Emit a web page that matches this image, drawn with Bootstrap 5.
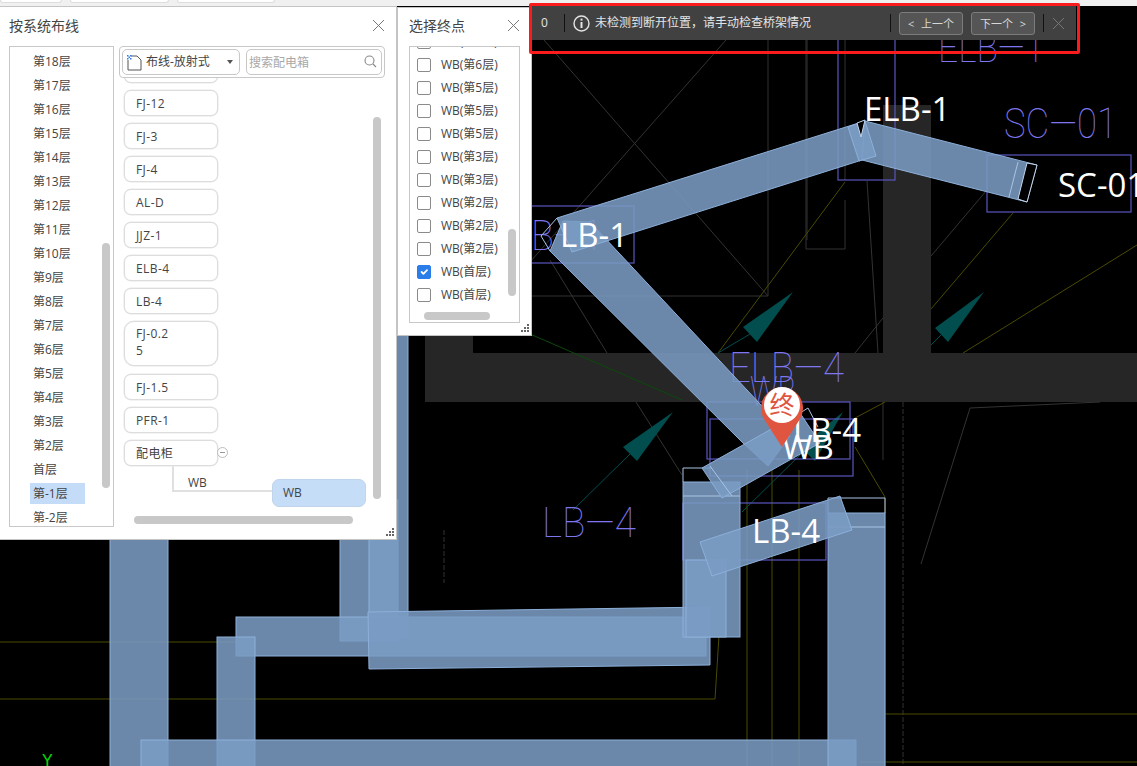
<!DOCTYPE html>
<html lang="en">
<head>
    <meta charset="UTF-8">
    <meta name="viewport" content="width=device-width, initial-scale=1.0">
    <title>按系统布线</title>
    <link rel="stylesheet" href="https://cdn.jsdelivr.net/npm/bootstrap@5.3.0/dist/css/bootstrap.min.css">
    <style>
        html, body { margin: 0; background: #000; overflow: hidden; }
        body { font-family: "Open Sans", "Noto Sans CJK SC", sans-serif; font-size: 12px; color: #444; }
        .stage { position: relative; width: 1137px; height: 766px; overflow: hidden; background: #000; }
        .cad { position: absolute; left: 0; top: 0; }

        .top-strip { position: absolute; left: 0; top: 0; width: 100%; height: 6px; background: #f0f0f0; }
        .top-tab { height: 3px; background: #fff; border: 1px solid #ddd; border-top: 0; border-radius: 0 0 4px 4px; }

        .wall { fill: #262626; }
        .thin { stroke: #333; stroke-width: 1; fill: none; }
        .dash { stroke: #333; stroke-width: 1; fill: none; stroke-dasharray: 5 2; }
        .olive { stroke: #4a4a00; stroke-width: 1; fill: none; }
        .green { stroke: #0a4a0a; stroke-width: 1; fill: none; }
        .teal { fill: #024d4d; }
        .teal-line { stroke: #024d4d; stroke-width: 1; fill: none; }
        .box { stroke: #5a55c0; stroke-width: 1.2; fill: none; }
        .tray { fill: rgb(122,155,195); fill-opacity: .88; stroke: #8db0da; stroke-width: 1; }
        .tray-edge { fill: none; stroke: #a9c4e4; stroke-width: 1; }
        .tray-end { fill: #000; stroke: #c4d6ec; stroke-width: 1; }
        .cad-blue { font-family: Roboto, "Liberation Sans", sans-serif; font-weight: 100; font-size: 43px; fill: #7d76ee; }
        .cad-white { font-family: "Open Sans", sans-serif; font-size: 33px; fill: #fff; }
        .cad-axis { font-family: "Liberation Sans", sans-serif; font-size: 16px; fill: #00e000; }
        .pin-body { fill: #e05540; }
        .pin-text { font-family: "Noto Sans CJK SC", sans-serif; font-size: 25px; fill: #e05540; }

        .float-win { position: absolute; background: #fff; border: 1px solid #c4c4c4; }
        .win-route { left: -2px; top: 6px; width: 399px; height: 534px; padding: 0 10px 0 10px; }
        .win-end { left: 397px; top: 7px; width: 135px; height: 329px; padding: 0 11px; }
        .win-head { height: 39px; font-size: 14px; color: #444; padding-bottom: 3px; }
        .win-end .win-head { height: 38px; }
        .x-mark { width: 13px; height: 13px; stroke: #777; stroke-width: 1; fill: none; flex: none; }
        .route-x { margin-right: 1px; }
        .win-grip { position: absolute; right: 1px; bottom: 2px; width: 10px; height: 10px; fill: #666; }

        .floor-box { position: relative; width: 105px; height: 481px; border: 1px solid #c8c8c8; overflow: hidden; padding-top: 3px; flex: none; }
        .floor-row { height: 24px; line-height: 24px; font-size: 12px; padding-left: 20px; }
        .floor-row span { display: inline-block; height: 21px; line-height: 21px; padding: 0 14px 0 3px; width: 55px; }
        .floor-on span { background: #c5dcf8; }
        .thumb { position: absolute; background: #c8c8c8; border-radius: 4px; }
        .floor-thumb { left: 92px; top: 196px; width: 8px; height: 245px; }

        .tree-side { position: relative; width: 266px; height: 491px; margin-left: 5px; flex: none; }
        .tool-row { position: relative; z-index: 1; height: 32px; padding: 0 2px; border: 1px solid #c8c8c8; border-radius: 4px; background: #fff; gap: 6px; }
        .kind-pick { width: 118px; height: 26px; border: 1px solid #c8c8c8; border-radius: 5px; padding: 0 6px 0 3px; }
        .kind-caret { width: 0; height: 0; border: 3px solid transparent; border-top: 4px solid #555; border-bottom: 0; margin-left: auto; }
        .doc-mark { width: 16px; height: 17px; margin-right: 4px; flex: none; }
        .find-wrap { position: relative; width: 136px; height: 26px; }
        .find-input.form-control { height: 26px; min-height: 0; font-size: 12px; padding: 0 20px 0 2px; border: 1px solid #c8c8c8; border-radius: 5px; color: #444; box-shadow: none; }
        .find-input::placeholder { color: #a8a8a8; }
        .find-mark { position: absolute; right: 5px; top: 6px; width: 13px; height: 13px; stroke: #888; fill: none; stroke-width: 1.1; }

        .tree-clip { height: 459px; overflow: hidden; padding-left: 5px; }
        .tree-list { margin-top: -21px; gap: 7px; }
        .tree-node { width: 94px; height: 26px; line-height: 26px; border: 1px solid #ddd; border-radius: 7px; padding-left: 11px; box-shadow: 0 0 0 .5px #e8e8e8; background: #fff; flex: none; letter-spacing: .4px; }
        .tree-tall { height: 45px; line-height: 17px; padding-top: 3px; border-radius: 10px; margin-bottom: 1px; }
        .tree-fold { position: absolute; left: 92px; top: 6px; width: 11px; height: 11px; }
        .tree-kids { margin-top: -7px; margin-left: 48px; }
        .kid-link { width: 100px; height: 26px; border-left: 2px solid #e0e0e0; border-bottom: 2px solid #e0e0e0; padding: 8px 0 0 14px; line-height: 17px; }
        .kid-node { width: 94px; height: 28px; line-height: 26px; margin-top: 13px; background: #c6ddf8; border: 1px solid #c0d4ec; border-radius: 7px; padding-left: 10px; }
        .tree-v { left: 254px; top: 71px; width: 8px; height: 382px; }
        .tree-h { left: 15px; top: 470px; width: 219px; height: 8px; }

        .end-box { position: relative; height: 277px; border: 1px solid #c8c8c8; overflow: hidden; padding-left: 7px; }
        .end-list { margin-top: -17px; }
        .end-row { height: 23px; gap: 10px; font-size: 12px; flex: none; }
        .end-row .form-check-input { width: 14px; height: 14px; margin: 0; border: 1px solid #8a8a8a; border-radius: 2px; flex: none; }
        .end-row .form-check-input:checked { background-color: #2b7de9; border-color: #2b7de9; }
        .end-v { left: 98px; top: 182px; width: 8px; height: 67px; }
        .end-h { left: 14px; top: 265px; width: 66px; height: 8px; }

        .msg-bar { position: absolute; left: 530px; top: 6px; width: 546px; height: 34px; background: #414141; color: #e4e4e4; padding-left: 11px; }
        .msg-count { width: 23px; }
        .msg-sep { width: 1px; height: 18px; background: #111; flex: none; }
        .msg-info { width: 17px; height: 17px; margin: 0 5px 0 8px; flex: none; fill: none; stroke: #e4e4e4; }
        .msg-text { width: 295px; white-space: nowrap; }
        .btn.msg-btn { width: 64px; height: 23px; padding: 0 8px; font-size: 11px; line-height: 1; color: #d8d8d8; background: #555; border: 1px solid #7c7c7c; border-radius: 3px; }
        .msg-x { stroke: #777; }
        .red-note { position: absolute; left: 529px; top: 3px; width: 551px; height: 51px; border: 3px solid #fa1c1c; border-radius: 2px; pointer-events: none; }
    </style>
</head>
<body>
<div class="stage">

    <svg class="cad" width="1137" height="766" viewBox="0 0 1137 766">
        <!-- walls -->
        <rect class="wall" x="425" y="353" width="712" height="49"/>
        <rect class="wall" x="883" y="105" width="48" height="250"/>
        <rect class="wall" x="425" y="330" width="48" height="25"/>

        <!-- thin cad lines -->
        <path class="thin" d="M544 40 768 296H530M726 40 530 262M550 260 607 353M636 402 682 475"/>
        <path class="thin" d="M768 40V296M807 40V240M845 40V180M867 181 878 353M883 318 855 353M987 190 931 256"/>
        <path class="thin" d="M1100 402 970 408 921 564M883 402V460"/>
        <path class="thin" d="M806 40V249H845V200"/>
        <path class="dash" d="M903 402V766M444 530V583"/>
        <path class="olive" d="M845 182 718 353M1013 213 931 309M1137 245 963 353M855 418 885 402M855 447 885 497V766"/>
        <path class="olive" d="M747 470V766M772 470V766M799 470V766M0 642H236M0 699H715L725 540M885 714H1137M860 762H1137"/>
        <path class="green" d="M530 334 682 400"/>

        <!-- teal arrows -->
        <path class="teal-line" d="M750 334 718 353"/>
        <polygon class="teal" points="793,292 743,327 757,342"/>
        <path class="teal-line" d="M630 454 573 510"/>
        <polygon class="teal" points="673,412 623,447 637,461"/>
        <path class="teal-line" d="M941 335 931 345"/>
        <polygon class="teal" points="984,292 935,328 948,342"/>
        <path class="teal-line" d="M800 455 742 512"/>
        <polygon class="teal" points="843,412 800,447 815,461"/>

        <!-- blue cad text and frames -->
        <text class="cad-blue" x="938" y="62" textLength="106" lengthAdjust="spacingAndGlyphs">ELB—1</text>
        <text class="cad-blue" x="1004" y="138" textLength="113" lengthAdjust="spacingAndGlyphs">SC—01</text>
        <text class="cad-blue" x="490" y="250" textLength="113" lengthAdjust="spacingAndGlyphs">ELB—1</text>
        <text class="cad-blue" x="729" y="382" textLength="115" lengthAdjust="spacingAndGlyphs">ELB—4</text>
        <text class="cad-blue" x="750" y="406" textLength="46" lengthAdjust="spacingAndGlyphs">WB</text>
        <text class="cad-blue" x="542" y="537" textLength="94" lengthAdjust="spacingAndGlyphs">LB—4</text>
        <rect class="box" x="838" y="30" width="57" height="150"/>
        <rect class="box" x="987" y="155" width="144" height="57"/>
        <rect class="box" x="490" y="206" width="144" height="57"/>
        <rect class="box" x="707" y="402" width="143" height="57"/>
        <rect class="box" x="710" y="419" width="143" height="57"/>
        <rect class="box" x="683" y="503" width="143" height="57"/>

        <!-- trays -->
        <rect class="tray" x="110" y="520" width="58" height="250"/>
        <rect class="tray" x="340" y="500" width="58" height="141"/>
        <rect class="tray" x="369" y="300" width="39" height="338"/>
        <rect class="tray" x="236" y="617" width="470" height="39"/>
        <rect class="tray" x="217" y="637" width="38" height="135"/>
        <polygon class="tray" points="368,612 710,607 710,665 369,669"/>
        <rect class="tray" x="141" y="740" width="715" height="30"/>
        <rect class="tray" x="828" y="513" width="57" height="257"/>
        <path class="tray-edge" d="M828 513V498H885V513M828 527H885"/>
        <rect class="tray" x="683" y="482" width="57" height="155"/>
        <rect class="tray" x="686" y="560" width="40" height="77"/>
        <path class="tray-edge" d="M683 482V468H712M683 496H740"/>
        <polygon class="tray" points="700,542 840,496 852,530 712,576"/>

        <polygon class="tray" points="550,251 563,221 590,222 790,436 768,466 742,442"/>
        <polygon class="tray" points="702,468 800,413 820,443 722,498"/>
        <path class="tray-edge" d="M710 466 732 496M800 413 808 408 818 427"/>

        <polygon class="tray" points="557,218 865,121 862,160 572,252"/>
        <polygon class="tray" points="865,121 1037,165 1027,202 862,160"/>
        <polygon class="tray" points="848,127 865,121 876,156 859,161"/>
        <polygon class="tray-end" points="857,123 865,120 861,137"/>
        <path class="tray-edge" d="M541 236 557 218M541 236 550 251"/>
        <polygon class="tray-end" points="1027,163 1037,165 1027,202 1018,199"/>
        <path class="tray-edge" d="M1018 162 1009 197"/>

        <!-- white labels -->
        <text class="cad-white" x="864" y="121">ELB-1</text>
        <text class="cad-white" x="1058" y="197">SC-01</text>
        <text class="cad-white" x="560" y="247">LB-1</text>
        <text class="cad-white" x="793" y="442">LB-4</text>
        <text class="cad-white" x="782" y="459">WB</text>
        <text class="cad-white" x="752" y="543">LB-4</text>
        <text class="cad-axis" x="42" y="766">Y</text>

        <!-- end point pin -->
        <path class="pin-body" d="M782 447 764 419A21 21 0 1 1 800 419Z"/>
        <circle cx="782" cy="405" r="18" fill="#fff"/>
        <text class="pin-text" x="782" y="414" text-anchor="middle">终</text>
    </svg>

    <div class="top-strip d-flex gap-2">
        <div class="top-tab" style="width: 62px"></div>
        <div class="top-tab" style="width: 99px"></div>
        <div class="top-tab" style="width: 98px"></div>
    </div>

    <!-- route window -->
    <div class="float-win win-route">
        <div class="win-head d-flex align-items-center justify-content-between">
            <span>按系统布线</span>
            <svg class="x-mark route-x" viewBox="0 0 13 13"><path d="M1 1 12 12M12 1 1 12"/></svg>
        </div>
        <div class="d-flex">
            <div class="floor-box">
                <div id="floorList"></div>
                <div class="thumb floor-thumb"></div>
            </div>
            <div class="tree-side">
                <div class="tool-row d-flex align-items-center">
                    <div class="kind-pick d-flex align-items-center">
                        <svg class="doc-mark" viewBox="0 0 16 17">
                            <path d="M5 2H11L15 6V16H2V6" fill="none" stroke="#555"/>
                            <path d="M1 1h1.5v1.5H1zM2.5 2.5H4V4H2.5zM4 1h1.5v1.5H4zM1 4h1.5v1.5H1zM4 4h1.5v1.5H4z" fill="#2f7fe6"/>
                        </svg>
                        <span>布线-放射式</span>
                        <span class="kind-caret"></span>
                    </div>
                    <div class="find-wrap">
                        <input class="find-input form-control" type="text" placeholder="搜索配电箱">
                        <svg class="find-mark" viewBox="0 0 13 13"><circle cx="5.5" cy="5.5" r="4.5"/><path d="M9 9 12 12"/></svg>
                    </div>
                </div>
                <div class="tree-clip">
                    <div class="tree-list d-flex flex-column">
                        <div class="tree-node">FJ-11</div>
                        <div class="tree-node">FJ-12</div>
                        <div class="tree-node">FJ-3</div>
                        <div class="tree-node">FJ-4</div>
                        <div class="tree-node">AL-D</div>
                        <div class="tree-node">JJZ-1</div>
                        <div class="tree-node">ELB-4</div>
                        <div class="tree-node">LB-4</div>
                        <div class="tree-node tree-tall">FJ-0.2<br>5</div>
                        <div class="tree-node">FJ-1.5</div>
                        <div class="tree-node">PFR-1</div>
                        <div class="tree-node position-relative">配电柜
                            <svg class="tree-fold" viewBox="0 0 11 11"><circle cx="5.5" cy="5.5" r="5" fill="#fff" stroke="#bbb"/><path d="M3 5.5H8" stroke="#999"/></svg>
                        </div>
                        <div class="tree-kids d-flex align-items-start">
                            <div class="kid-link">WB</div>
                            <div class="kid-node">WB</div>
                        </div>
                    </div>
                </div>
                <div class="thumb tree-v"></div>
                <div class="thumb tree-h"></div>
            </div>
        </div>
        <svg class="win-grip" viewBox="0 0 10 10"><path d="M7 1h2v2H7zM4 4h2v2H4zM7 4h2v2H7zM1 7h2v2H1zM4 7h2v2H4zM7 7h2v2H7z"/></svg>
    </div>

    <!-- end point window -->
    <div class="float-win win-end">
        <div class="win-head d-flex align-items-center justify-content-between">
            <span class="ms-0">选择终点</span>
            <svg class="x-mark" viewBox="0 0 13 13"><path d="M1 1 12 12M12 1 1 12"/></svg>
        </div>
        <div class="end-box">
            <div class="end-list d-flex flex-column" id="endList"></div>
            <div class="thumb end-v"></div>
            <div class="thumb end-h"></div>
        </div>
        <svg class="win-grip" viewBox="0 0 10 10"><path d="M7 1h2v2H7zM4 4h2v2H4zM7 4h2v2H7zM1 7h2v2H1zM4 7h2v2H4zM7 7h2v2H7z"/></svg>
    </div>

    <!-- message bar -->
    <div class="msg-bar d-flex align-items-center">
        <span class="msg-count">0</span>
        <span class="msg-sep"></span>
        <svg class="msg-info" viewBox="0 0 17 17"><circle cx="8.5" cy="8.5" r="7.5" stroke-width="1.4"/><path d="M8.5 7V13" stroke-width="2"/><path d="M8.5 3.6V5.6" stroke-width="2"/></svg>
        <span class="msg-text">未检测到断开位置，请手动检查桥架情况</span>
        <span class="msg-sep"></span>
        <button type="button" class="btn msg-btn d-flex align-items-center justify-content-between ms-2">
            <span>&lt;</span><span>上一个</span>
        </button>
        <button type="button" class="btn msg-btn d-flex align-items-center justify-content-between ms-2 me-2">
            <span>下一个</span><span>&gt;</span>
        </button>
        <span class="msg-sep"></span>
        <svg class="x-mark msg-x ms-2" viewBox="0 0 13 13"><path d="M1 1 12 12M12 1 1 12"/></svg>
    </div>
    <div class="red-note"></div>
</div>

<script src="https://cdn.jsdelivr.net/npm/bootstrap@5.3.0/dist/js/bootstrap.bundle.min.js"></script>
<script>
    const floors = [];
    for (let i = 18; i >= 2; i--) floors.push("第" + i + "层");
    floors.push("首层", "第-1层", "第-2层");
    document.getElementById("floorList").innerHTML = floors.map(f =>
        '<div class="floor-row' + (f === "第-1层" ? " floor-on" : "") + '"><span>' + f + '</span></div>'
    ).join("");

    const ends = ["第7层", "第6层", "第5层", "第5层", "第5层", "第3层", "第3层", "第2层", "第2层", "第2层", "首层", "首层"];
    document.getElementById("endList").innerHTML = ends.map((e, i) =>
        '<label class="end-row d-flex align-items-center"><input class="form-check-input" type="checkbox"' +
        (i === 10 ? " checked" : "") + '><span>WB(' + e + ')</span></label>'
    ).join("");
</script>
</body>
</html>
